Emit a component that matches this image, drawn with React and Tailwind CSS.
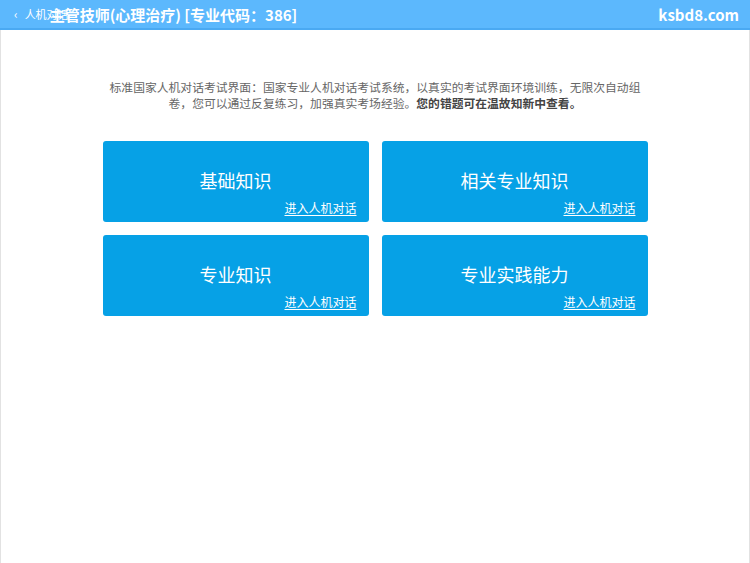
import React from "react";

const subjects = ["基础知识", "相关专业知识", "专业知识", "专业实践能力"];

const font = {
  fontFamily: '"Noto Sans CJK SC", "Noto Sans", sans-serif',
};

export default function App() {
  return (
    <div
      className="w-[750px] h-[563px] bg-white flex flex-col"
      style={font}
    >
      {/* Top bar */}
      <div className="h-[30px] bg-[#5cb8fd] border-b-2 border-[#4aa9f2] flex items-center text-white shrink-0">
        <div className="flex items-center pl-[14px] text-[11px] leading-none">
          <span className="text-[12px] mr-[7px]">‹</span>
          <span>人机对话</span>
        </div>
        <div className="-ml-[19px] text-[15px] font-bold leading-none whitespace-nowrap">
          主管技师(心理治疗) [专业代码：386]
        </div>
        <div className="ml-auto pr-[11px] text-[15px] font-bold leading-none">
          ksbd8.com
        </div>
      </div>

      {/* Body */}
      <div className="flex-1 border-x border-[#e2e2e2] flex flex-col items-center">
        <p className="mt-[49px] w-[545px] text-center text-[11.8px] leading-[16px] text-[#666]">
          标准国家人机对话考试界面：国家专业人机对话考试系统，以真实的考试界面环境训练，无限次自动组卷，您可以通过反复练习，加强真实考场经验。
          <b className="text-[#444]">您的错题可在温故知新中查看。</b>
        </p>

        <div className="mt-[30px] grid grid-cols-2 gap-[13px] w-[545px]">
          {subjects.map((s) => (
            <div
              key={s}
              className="h-[81px] bg-[#06a1e6] rounded-[3px] flex flex-col items-center text-white"
            >
              <div className="mt-[30px] text-[18px] leading-none">{s}</div>
              <div className="self-end mt-[13px] mr-[12px] text-[12px] leading-none underline underline-offset-2">
                进入人机对话
              </div>
            </div>
          ))}
        </div>
      </div>
    </div>
  );
}
